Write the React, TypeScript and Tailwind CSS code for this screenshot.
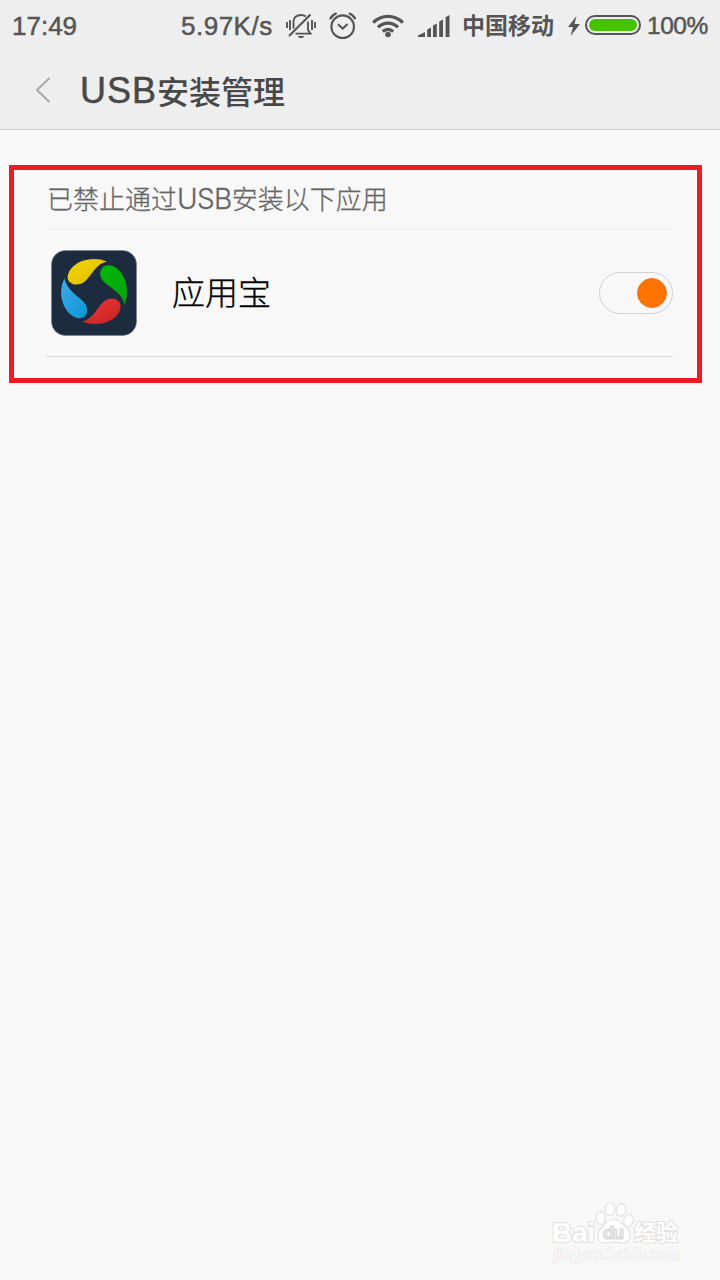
import type { ReactNode } from 'react';

const LATIN = "font-['Liberation_Sans','Noto_Sans_CJK_SC',sans-serif]";
const CJK = "font-['Noto_Sans_CJK_SC',sans-serif]";

function MuteIcon() {
  return (
    <svg width="30" height="26" viewBox="0 0 30 26" fill="none" stroke="#555" strokeWidth="1.9" className="ml-[12px] shrink-0">
      <path d="M1 9v6M4 7v10M26 7v10M29 9v6" />
      <path d="M7.500 15.500V8.500C7.500 4.500 10.500 2 15 2c2 0 3.500.5 4.800 1.600M22 8.500v8.500l2.500 3.600H9.500" />
      <path d="M3 23 24.500 1.500" strokeWidth="2.200" />
      <path d="M11.500 23h7l-2 2h-3z" fill="#555" stroke="none" />
    </svg>
  );
}

function AlarmIcon() {
  return (
    <svg width="28" height="28" viewBox="0 0 28 28" fill="none" stroke="#555" strokeWidth="2.100" className="ml-[13px] shrink-0">
      <circle cx="13.700" cy="14.700" r="11.300" />
      <path d="m9 12.300 4.700 4.200 4.900-4.500" />
      <path d="M1 7.200C2.200 4.600 4.600 2.300 7.700 1.200M26.500 7.200c-1.200-2.600-3.600-4.900-6.700-6" />
    </svg>
  );
}

function WifiIcon() {
  return (
    <svg width="32" height="24" viewBox="0 0 32 24" fill="none" stroke="#555" strokeWidth="3.200" className="ml-[15px] shrink-0">
      <path d="M1.200 8.700C9.600.3 22.400.3 30.800 8.700" />
      <path d="M6 13.300c5.900-5.500 14.100-5.500 20 0" />
      <path d="M10.700 17.500c3.300-2.700 7.300-2.700 10.600 0" />
      <circle cx="16" cy="20.500" r="2.800" fill="#555" stroke="none" />
    </svg>
  );
}

function SignalIcon() {
  return (
    <svg width="32" height="22" viewBox="0 0 32 22" fill="#555" className="ml-[14px] shrink-0">
      <path d="M0 22v-1.500L7 17v5zM9.200 22v-7.500l3.800-2V22zM15 22V10.500l3.800-2V22zM21.200 22V6.500l3.800-2V22zM27.600 22V2.200L31.500 0v22z" />
    </svg>
  );
}

function Battery() {
  return (
    <div className="mb-px ml-[5px] h-5 w-[56px] shrink-0 rounded-full border-2 border-[#555] p-[2px]">
      <div className="h-full w-full rounded-full bg-[#46c300]" />
    </div>
  );
}

function StatusText({ children, className }: { children: ReactNode; className: string }) {
  return (
    <span className={`shrink-0 whitespace-nowrap leading-[52px] [-webkit-text-stroke:0.5px_#555] ${className}`}>
      {children}
    </span>
  );
}

function StatusBar() {
  return (
    <div className={`flex h-[51px] items-center pl-3 text-[#555] ${LATIN}`}>
      <StatusText className="w-[169px] text-[26px]">17:49</StatusText>
      <StatusText className="w-[93px] text-[26px] tracking-[0.500px]">5.97K/s</StatusText>
      <MuteIcon />
      <AlarmIcon />
      <WifiIcon />
      <SignalIcon />
      <span className={`ml-3 shrink-0 whitespace-nowrap pb-0.5 text-[23px] font-bold leading-[49px] ${CJK}`}>中国移动</span>
      <svg width="12" height="20" viewBox="0 0 12 20" fill="#555" className="ml-[14px] shrink-0">
        <path d="M8.500 0 0 11h5L2.500 20 12 8H6.500z" />
      </svg>
      <Battery />
      <StatusText className="ml-[6px] text-[24.500px] tracking-[-0.500px]">100%</StatusText>
    </div>
  );
}

function AppIcon() {
  return (
    <svg width="86" height="86" viewBox="0 0 86 86">
      <defs>
        <linearGradient id="yellow" x1="0" y1="0" x2="1" y2="1">
          <stop offset="0" stopColor="#f5d800" />
          <stop offset="1" stopColor="#dcb800" />
        </linearGradient>
        <linearGradient id="green" x1="0" y1="0" x2="1" y2="1">
          <stop offset="0" stopColor="#00b808" />
          <stop offset="1" stopColor="#08a10d" />
        </linearGradient>
        <linearGradient id="red" x1="0" y1="0" x2="1" y2="1">
          <stop offset="0" stopColor="#e83a36" />
          <stop offset="1" stopColor="#c92222" />
        </linearGradient>
        <linearGradient id="blue" x1="0" y1="0" x2="1" y2="1">
          <stop offset="0" stopColor="#45aae8" />
          <stop offset="1" stopColor="#0796d8" />
        </linearGradient>
      </defs>
      <rect x=".5" y=".5" width="85" height="85" rx="14" fill="#1d2b3e" stroke="#77808c" strokeWidth=".6" />
      <path fill="url(#yellow)" d="M56 11.500C44 6.500 27 9 19.500 19.500c-3.500 5-4 10-.5 12.800 4 3.600 11 2.700 15.500-1.300C41.500 24 45 14 56 11.500Z" />
      <path fill="url(#green)" d="M73.500 54.500C79 42 75.500 26 66 18.500c-4.800-3.800-10.800-4.500-14.500-1-4 4-2.500 11 2 15C61 39 71 43 73.500 54.500Z" />
      <path fill="url(#red)" d="M31 71.500c13 5 28 2.500 35.500-7 3.800-4.800 4.300-10.300.8-13.500-4-4-11-3-15.500 1.500C45 59 42 69.500 31 71.500Z" />
      <path fill="url(#blue)" d="M13.500 28.500C7 41 10.500 57 20 64.800c4.800 3.900 10.500 4.700 14 1.200 4-4 2.300-11-2.200-15C25.500 45 16 40 13.500 28.500Z" />
    </svg>
  );
}

function Toggle() {
  return (
    <div className="flex h-[42px] w-[74px] items-center justify-end rounded-full border border-[#d2d2d2] pr-[5px]">
      <div className="size-[30px] rounded-full border border-[#ec7426] bg-[#ff7300]" />
    </div>
  );
}

function Watermark() {
  return (
    <svg width="140" height="80" viewBox="0 0 140 80" fill="#fefefe" stroke="#e2e2e2" strokeWidth="1.200" strokeLinejoin="round" className="absolute bottom-0 right-[30px]">
      <g paintOrder="stroke" strokeWidth="2.200">
        <text x="2" y="41.500" fontFamily="Liberation Sans" fontWeight="bold" fontSize="28" textLength="43">Bai</text>
        <text x="84" y="40" fontFamily="Noto Sans CJK SC" fontWeight="bold" fontSize="22">经验</text>
        <text x="4" y="59" fontFamily="Open Sans" fontSize="14.500" textLength="126" stroke="#e8e8e8" strokeWidth="1.600">jingyan.baidu.com</text>
      </g>
      <ellipse cx="50.700" cy="18" rx="4.800" ry="6.300" />
      <ellipse cx="60" cy="9" rx="4.800" ry="6.500" />
      <ellipse cx="71" cy="10" rx="4.800" ry="6.300" transform="rotate(12 71 10)" />
      <ellipse cx="78.500" cy="20.500" rx="4.800" ry="6.300" transform="rotate(12 78.500 20.500)" />
      <path d="M64 19c6 0 8 5 13 9 6 6 3 15-4 15-3 0-5-1-9-1s-6 1-9 1c-8 0-9-9-4-15 4-4 7-9 13-9Z" />
      <text x="53" y="39" fill="#eee" fontFamily="Liberation Sans" fontWeight="bold" fontSize="19" textLength="21" stroke="#d8d8d8">du</text>
    </svg>
  );
}

export default function App() {
  return (
    <div className={`relative flex h-[1280px] w-[720px] flex-col overflow-hidden bg-[#f8f8f8] ${LATIN}`}>
      <header className="h-[130px] border-b border-[#cecece] bg-[#eee]">
        <StatusBar />
        <div className="flex h-[77px] items-center pl-[35px] text-[#484848]">
          <svg width="16" height="26" viewBox="0 0 16 26" fill="none" stroke="#a8a8a8" strokeWidth="2">
            <path d="M14.500 1 2 13l12.500 12" />
          </svg>
          <h1 className="ml-[29px] flex items-center whitespace-nowrap">
            <span className="pt-0.5 text-[36px] leading-[58px] tracking-[1px] [-webkit-text-stroke:0.500px_#484848]">USB</span>
            <span className={`text-[32px] font-medium leading-[60px] ${CJK}`}>安装管理</span>
          </h1>
        </div>
      </header>

      {/* Blocked apps */}
      <section className="ml-[9px] mt-[35px] h-[218px] w-[693px] border-[5px] border-[#ed1c24] pl-8 pr-6">
        <div className={`flex h-[60px] items-baseline whitespace-nowrap border-b border-[#f0f0f0] pl-px text-[26px] font-light leading-[55px] text-[#666] [-webkit-text-stroke:0.300px_#666] ${CJK}`}>
          <span>已禁止通过</span>
          <span className="font-['Inter',sans-serif] text-[28px] tracking-[-0.600px]">USB</span>
          <span>安装以下应用</span>
        </div>
        <div className="flex h-[127px] items-center border-b border-[#dcdcdc] pl-[5px]">
          <AppIcon />
          <span className={`ml-[35px] flex-1 pb-0.5 text-[33px] font-light text-black [-webkit-text-stroke:0.300px_#000] ${CJK}`}>应用宝</span>
          <Toggle />
        </div>
      </section>

      <Watermark />
    </div>
  );
}
